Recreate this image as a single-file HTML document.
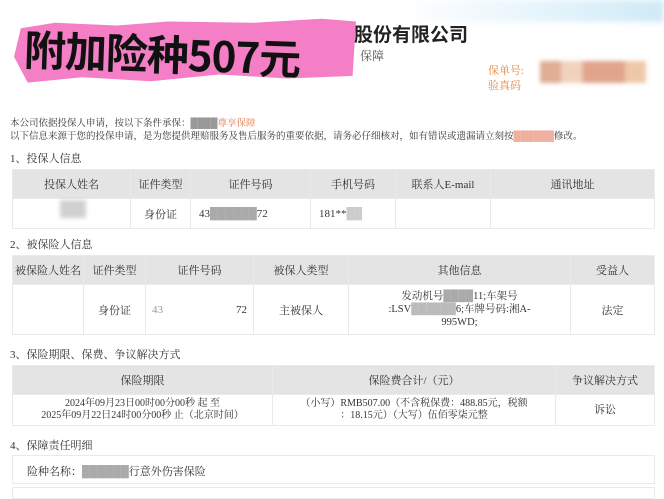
<!DOCTYPE html>
<html><head><meta charset="utf-8"><style>
*{margin:0;padding:0;box-sizing:border-box}
body{width:664px;height:498px;overflow:hidden;background:#fff;position:relative;font-family:"Liberation Serif","Noto Serif CJK SC",serif;color:#333}
.a{position:absolute;white-space:nowrap}
.t{position:absolute;border-collapse:collapse;font-size:11px;text-align:center;color:#333}
.t td{border:1px solid #eaeaea;padding:0}
.h td{background:#e4e4e4}
.blur{position:absolute;filter:blur(2px)}
</style></head><body>
<div class="a" style="left:400px;top:0;width:264px;height:22px;background:linear-gradient(90deg,#fff,#e3f3fb 60%,#cfeaf7);filter:blur(3px)"></div>
<div class="a" style="left:14px;top:16px;width:342px;height:68px;background:#f57fc6;clip-path:polygon(2% 18%,12% 10%,30% 14%,45% 8%,70% 10%,90% 4%,100% 8%,99% 88%,80% 92%,60% 86%,40% 96%,20% 90%,4% 98%,0 60%)"></div>
<div class="a" style="left:24px;top:22px;font:bold 42px 'Noto Sans CJK SC',sans-serif;color:#111;letter-spacing:-1px;transform:rotate(2deg)">附加险种507元</div>
<div class="a" style="left:354px;top:20px;font:bold 19px 'Noto Sans CJK SC',sans-serif;color:#222">股份有限公司</div>
<div class="a" style="left:360px;top:47px;font-size:12px;color:#555">保障</div>
<div class="a" style="left:488px;top:64px;font-size:11px;color:#e08a4a;line-height:15px">保单号:<br>验真码</div>
<div class="blur" style="left:540px;top:61px;width:106px;height:22px;background:linear-gradient(90deg,#e0ad95 20%,#f1d3bd 20%,#f1d3bd 40%,#e0a58c 40%,#e0a58c 80%,#efc8a8 80%)"></div>
<div class="a" style="left:10px;top:118px;font-size:9.5px;line-height:13px;color:#333">本公司依据投保人申请，按以下条件承保：<span style="color:#999">████</span><span style="color:#e27a50">尊享保障</span><br>以下信息来源于您的投保申请，是为您提供理赔服务及售后服务的重要依据，请务必仔细核对，如有错误或遗漏请立刻按<span style="color:#f0b0a0">██████</span>修改。</div>
<div class="a" style="left:10px;top:150px;font-size:11px">1、投保人信息</div>
<table class="t" style="left:12px;top:169px;width:643px">
<tr class="h" style="height:29px"><td style="width:118px">投保人姓名</td><td style="width:60px">证件类型</td><td style="width:120px">证件号码</td><td style="width:85px">手机号码</td><td style="width:95px">联系人E-mail</td><td>通讯地址</td></tr>
<tr style="height:30px;background:#fff"><td></td><td>身份证</td><td style="text-align:left;padding-left:8px">43<span style="color:#aaa">██████</span>72</td><td style="text-align:left;padding-left:8px">181**<span style="color:#ccc">██</span></td><td></td><td></td></tr>
</table>
<div class="blur" style="left:60px;top:200px;width:26px;height:18px;background:#d0d0d0"></div>
<div class="a" style="left:10px;top:236px;font-size:11px">2、被保险人信息</div>
<table class="t" style="left:12px;top:255px;width:643px">
<tr class="h" style="height:29px"><td style="width:71px">被保险人姓名</td><td style="width:62px">证件类型</td><td style="width:108px">证件号码</td><td style="width:95px">被保人类型</td><td style="width:222px">其他信息</td><td>受益人</td></tr>
<tr style="height:50px"><td></td><td>身份证</td><td style="text-align:left;padding:0 6px"><span style="color:#999">43</span><span style="float:right">72</span></td><td>主被保人</td><td style="font-size:10.5px;line-height:13px">发动机号<span style="color:#aaa">████</span>11;车架号<br>:LSV<span style="color:#bbb">██████</span>6;车牌号码:湘A-<br>995WD;</td><td>法定</td></tr>
</table>
<div class="a" style="left:10px;top:346px;font-size:11px">3、保险期限、保费、争议解决方式</div>
<table class="t" style="left:12px;top:365px;width:643px">
<tr class="h" style="height:29px"><td style="width:260px">保险期限</td><td style="width:283px">保险费合计/（元）</td><td>争议解决方式</td></tr>
<tr style="height:31px;font-size:10px;line-height:12px"><td>2024年09月23日00时00分00秒 起 至<br>2025年09月22日24时00分00秒 止（北京时间）</td><td>（小写）RMB507.00（不含税保费：488.85元，税额<br>：18.15元）（大写）伍佰零柒元整</td><td style="font-size:11px">诉讼</td></tr>
</table>
<div class="a" style="left:10px;top:437px;font-size:11px">4、保障责任明细</div>
<div class="a" style="left:12px;top:455px;width:643px;height:29px;border:1px solid #eaeaea;font-size:11px;padding:7px 0 0 14px">险种名称：<span style="color:#aaa">██████</span>行意外伤害保险</div>
<div class="a" style="left:12px;top:487px;width:643px;height:12px;border:1px solid #eaeaea"></div>
</body></html>
